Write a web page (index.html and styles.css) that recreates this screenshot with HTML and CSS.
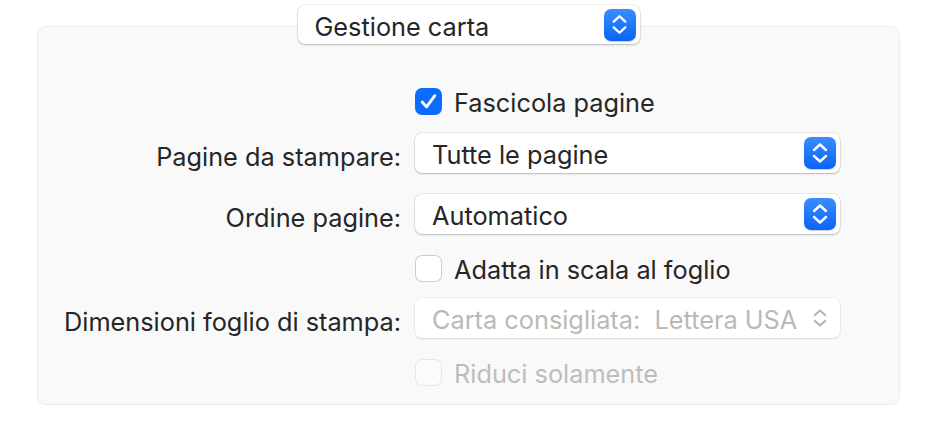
FILE: index.html
```html
<!DOCTYPE html>
<html lang="it">
<head>
<meta charset="utf-8">
<link rel="stylesheet" href="styles.css">
</head>
<body>
<div class="page">
  <div class="header">
    <div class="popup popup-top">
      <span class="popup-text">Gestione carta</span>
      <span class="stepper"><svg viewBox="0 0 32 32" width="31" height="31"><path d="M10 13 L16 7.5 L22 13 M10 19 L16 24.5 L22 19" fill="none" stroke="#fff" stroke-width="2.4" stroke-linecap="round" stroke-linejoin="round"/></svg></span>
    </div>
  </div>
  <div class="panel">
    <div class="row r1">
      <div class="label"></div>
      <label class="check"><span class="box checked"><svg viewBox="0 0 28 28" width="27" height="27"><path d="M7.5 14.5 L12 19.5 L20.5 8" fill="none" stroke="#fff" stroke-width="3" stroke-linecap="round" stroke-linejoin="round"/></svg></span><span class="check-text">Fascicola pagine</span></label>
    </div>
    <div class="row r2">
      <div class="label">Pagine da stampare:</div>
      <div class="popup popup-wide">
        <span class="popup-text">Tutte le pagine</span>
        <span class="stepper"><svg viewBox="0 0 32 32" width="32" height="32"><path d="M10 13 L16 7.5 L22 13 M10 19 L16 24.5 L22 19" fill="none" stroke="#fff" stroke-width="2.4" stroke-linecap="round" stroke-linejoin="round"/></svg></span>
      </div>
    </div>
    <div class="row r3">
      <div class="label">Ordine pagine:</div>
      <div class="popup popup-wide">
        <span class="popup-text">Automatico</span>
        <span class="stepper"><svg viewBox="0 0 32 32" width="32" height="32"><path d="M10 13 L16 7.5 L22 13 M10 19 L16 24.5 L22 19" fill="none" stroke="#fff" stroke-width="2.4" stroke-linecap="round" stroke-linejoin="round"/></svg></span>
      </div>
    </div>
    <div class="row r4">
      <div class="label"></div>
      <label class="check"><span class="box"></span><span class="check-text">Adatta in scala al foglio</span></label>
    </div>
    <div class="row r5">
      <div class="label">Dimensioni foglio di stampa:</div>
      <div class="popup popup-wide disabled">
        <span class="popup-text">Carta consigliata:&nbsp; Lettera USA</span>
        <span class="stepper plain"><svg viewBox="0 0 32 32" width="32" height="32"><path d="M11 13 L16 8.5 L21 13 M11 19 L16 23.5 L21 19" fill="none" stroke="#b4b4b4" stroke-width="2.2" stroke-linecap="round" stroke-linejoin="round"/></svg></span>
      </div>
    </div>
    <div class="row r6">
      <div class="label"></div>
      <label class="check disabled"><span class="box"></span><span class="check-text">Riduci solamente</span></label>
    </div>
  </div>
</div>
</body>
</html>
```

FILE: styles.css
```css
* { box-sizing: border-box; }
html, body { margin: 0; padding: 0; background: #ffffff; }
body {
  font-family: Inter, "Noto Sans", "Liberation Sans", sans-serif;
  font-size: 25.3px;
  color: #262626;
  width: 931px;
  height: 426px;
  overflow: hidden;
}
.page {
  padding: 5px 0 0 37px;
  width: 900px;
}
.header {
  display: flex;
  justify-content: center;
  margin-bottom: -18px;
  position: relative;
  z-index: 1;
}
.popup {
  display: flex;
  align-items: center;
  justify-content: space-between;
  background: #ffffff;
  border-radius: 7px;
  box-shadow: 0 0 0 0.5px rgba(0,0,0,0.12), 0 1px 2px rgba(0,0,0,0.22);
  height: 40px;
  padding: 0 4px 0 17px;
  white-space: nowrap;
}
.popup-text { padding-top: 3px; }
.popup-top {
  width: 342px;
  height: 39px;
}
.popup-wide {
  width: 425px;
  height: 40px;
}
.stepper {
  width: 32px;
  height: 32px;
  border-radius: 7px;
  background: linear-gradient(#3a8dff, #0a63f6);
  display: flex;
  align-items: center;
  justify-content: center;
  box-shadow: 0 0.5px 1px rgba(0,0,0,0.2);
  flex: none;
}
.stepper svg { display: block; }
.stepper.plain { background: none; box-shadow: none; }
.popup.disabled { box-shadow: 0 0 0 0.5px rgba(0,0,0,0.07), 0 1px 2px rgba(0,0,0,0.10); }
.popup.disabled .popup-text { color: #b9b9b9; }
.panel {
  background: #f9f9f9;
  border: 1px solid #ececec;
  border-radius: 9px;
  width: 863px;
  height: 379px;
  padding-top: 54px;
}
.row {
  display: grid;
  grid-template-columns: 363px 427px;
  column-gap: 14px;
  align-items: center;
  height: 40px;
}
.r2 { margin-top: 12px; }
.r3 { margin-top: 21px; }
.r4 { margin-top: 14px; }
.r5 { margin-top: 10px; }
.r6 { margin-top: 14px; }
.label {
  text-align: right;
  white-space: nowrap;
  padding-top: 7px;
}
.check {
  display: flex;
  align-items: center;
  gap: 12px;
  white-space: nowrap;
}
.check-text { padding-top: 3px; }
.box {
  width: 27px;
  height: 27px;
  border-radius: 7px;
  background: #ffffff;
  box-shadow: inset 0 0 0 1px #cdcdcd;
  display: flex;
  flex: none;
}
.box svg { display: block; }
.box.checked {
  background: #0b6cff;
  box-shadow: none;
}
.check.disabled .box { box-shadow: inset 0 0 0 1px #e6e6e6; background: #fbfbfb; }
.check.disabled .check-text { color: #bdbdbd; }
```
